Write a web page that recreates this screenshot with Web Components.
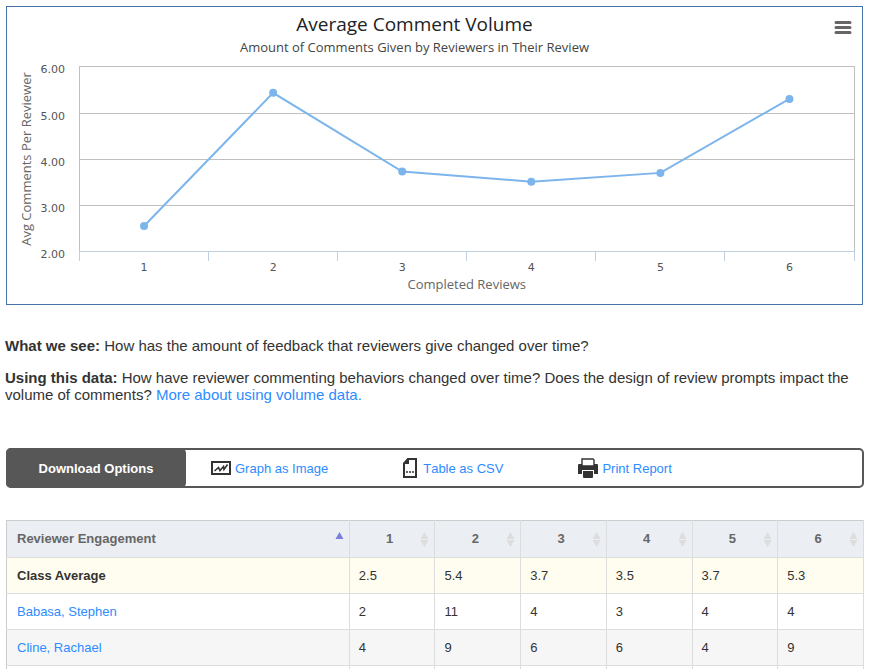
<!DOCTYPE html>
<html lang="en">

<head>
    <meta charset="UTF-8">
    <meta name="viewport" content="width=device-width, initial-scale=1.0">
    <title>Average Comment Volume</title>
    <style>
        :root {
            --text: #333;
            --link: #2d8cff;
            --dark: #575757;
        }
        body {
            margin: 6px 5px 0;
            background: #fff;
            color: var(--text);
            font: 15px/17px "Liberation Sans", Arial, sans-serif;
        }
    </style>
</head>

<body>
    <report-page>
        <line-chart slot="chart" heading="Average Comment Volume"
            subheading="Amount of Comments Given by Reviewers in Their Review"
            x-title="Completed Reviews" y-title="Avg Comments Per Reviewer"
            min="2" max="6" values="2.55,5.43,3.73,3.51,3.7,5.3"></line-chart>
        <report-note label="What we see:">How has the amount of feedback that reviewers give changed over time?</report-note>
        <report-note label="Using this data:">How have reviewer commenting behaviors changed over time? Does the design of review prompts impact the volume of comments? <text-link>More about using volume data.</text-link></report-note>
        <download-bar slot="downloads" label="Download Options">
            <download-item icon="graph">Graph as Image</download-item>
            <download-item icon="csv">Table as CSV</download-item>
            <download-item icon="print">Print Report</download-item>
        </download-bar>
        <engagement-table slot="table"></engagement-table>
    </report-page>

    <template id="report-page">
        <style>
            :host {
                display: block;
            }
            .chart {
                margin: 0 1px;
            }
            .notes {
                display: grid;
                gap: 15px;
                margin: 32px 0 45px;
            }
            .downloads {
                margin: 0 0 32px 1px;
            }
            .table {
                margin: 0 0 0 1px;
            }
        </style>
        <div class="chart"><slot name="chart"></slot></div>
        <div class="notes"><slot></slot></div>
        <div class="downloads"><slot name="downloads"></slot></div>
        <div class="table"><slot name="table"></slot></div>
    </template>

    <template id="report-note">
        <style>
            :host {
                display: block;
            }
            p {
                margin: 0;
            }
        </style>
        <p><b></b> <slot></slot></p>
    </template>

    <template id="text-link">
        <style>
            :host {
                display: inline;
            }
            a {
                color: var(--link);
                text-decoration: none;
            }
        </style>
        <a href="#"><slot></slot></a>
    </template>

    <template id="line-chart">
        <style>
            :host {
                display: block;
                position: relative;
                border: 1px solid #4572a7;
                font-family: "Open Sans", sans-serif;
            }
            svg {
                display: block;
                width: 100%;
            }
            button {
                position: absolute;
                top: 9px;
                right: 7px;
                width: 24px;
                height: 22px;
                padding: 0;
                border: 0;
                background: none;
            }
            text {
                font-family: "DejaVu Sans", sans-serif;
                font-size: 11px;
                fill: #555;
            }
            .title {
                font-family: inherit;
                font-size: 19px;
                fill: #222;
            }
            .subtitle {
                font-family: inherit;
                font-size: 13px;
                fill: #444;
            }
            .axis-title {
                font-family: inherit;
                font-size: 13px;
                fill: #666;
            }
            .grid {
                stroke: #c0c0c0;
                fill: none;
            }
            .axis {
                stroke: #c0d0e0;
            }
            .series {
                stroke: #7cb5ec;
                stroke-width: 2;
                fill: none;
            }
            circle {
                fill: #7cb5ec;
            }
        </style>
        <svg id="plot" height="297"></svg>
        <button type="button" aria-label="Chart menu">
            <svg width="24" height="22" viewBox="0 0 24 22" stroke="#666" stroke-width="3" stroke-linecap="round">
                <path d="M5 6.5H19M5 11.5H19M5 16.5H19" />
            </svg>
        </button>
    </template>

    <template id="download-bar">
        <style>
            :host {
                display: flex;
                height: 40px;
                box-sizing: border-box;
                border: 2px solid var(--dark);
                border-radius: 5px;
                font-size: 13px;
                font-kerning: none;
            }
            .label {
                display: flex;
                align-items: center;
                justify-content: center;
                width: 180px;
                margin: -2px 0 -2px -2px;
                border-radius: 5px;
                background: var(--dark);
                color: #fff;
                font-weight: bold;
            }
            .items {
                display: flex;
                align-items: center;
                gap: 74px;
                padding-left: 25px;
            }
        </style>
        <div class="label"></div>
        <div class="items"><slot></slot></div>
    </template>

    <template id="download-item">
        <style>
            :host {
                display: block;
            }
            a {
                display: flex;
                align-items: center;
                gap: 4px;
                color: var(--link);
                text-decoration: none;
            }
            svg {
                display: block;
            }
        </style>
        <a href="#"><span id="icon"></span><slot></slot></a>
    </template>

    <template id="engagement-table">
        <style>
            :host {
                display: block;
                font-size: 13px;
            }
            table {
                width: 100%;
                table-layout: fixed;
                border-collapse: collapse;
            }
            th, td {
                box-sizing: border-box;
                height: 36px;
                padding: 0 9px;
                border: 1px solid #ddd;
                text-align: left;
            }
            thead th {
                height: 37px;
                padding-bottom: 2px;
                border-top-color: #ccc;
                background: #ebeef3;
                color: #666;
            }
            th:first-child {
                width: 40%;
                padding-left: 10px;
                border-left-color: #ccc;
            }
            tbody tr:nth-child(odd) {
                background: #f6f6f6;
            }
            tbody tr:nth-child(even) {
                background: #fff;
            }
            tbody tr.average {
                background: #fffdf0;
            }
            tbody th {
                font-weight: normal;
            }
            .average th {
                font-weight: bold;
            }
            a {
                color: var(--link);
                text-decoration: none;
            }
            button {
                display: flex;
                align-items: center;
                width: 100%;
                padding: 0;
                border: 0;
                background: none;
                color: inherit;
                font: inherit;
                text-align: center;
            }
            button span {
                flex: 1;
            }
            th:first-child button span {
                text-align: left;
            }
            button svg {
                margin: 2px -4px 0 0;
            }
        </style>
        <table>
            <thead><tr></tr></thead>
            <tbody></tbody>
        </table>
    </template>

    <script>
        const ICONS = {
            graph: `<svg width="20" height="16" viewBox="0 0 20 16" fill="none" stroke="#333">
                <rect x="1" y="2" width="18" height="12" stroke-width="2" />
                <path d="M3.500 11L7.500 7.500L9 10.500L12.500 6.500L13 9.500L16.500 4.500" stroke-width="1.600" />
            </svg>`,
            csv: `<svg width="17" height="22" viewBox="0 0 17 22" fill="none" stroke="#333">
                <path d="M6 2H14V20H2V7Z" stroke-width="2" />
                <path d="M1 6L6 1H7V7H1Z" fill="#333" stroke="none" />
                <path d="M4 15H6M7 15H9M10 15H12" stroke-width="1.500" />
            </svg>`,
            print: `<svg width="21" height="20" viewBox="-1 0 21 20" fill="#333">
                <path d="M0 7Q0 6 1 6H19Q20 6 20 7V16H16V12H4V16H0Z" />
                <path d="M4 1H15L16 2V8H4Z" fill="#fff" stroke="#333" stroke-width="1.400" />
                <path d="M5 13H15V15H5Z" />
                <path d="M5 15H15V19Q15 20 14 20H6Q5 20 5 19Z" />
            </svg>`
        };

        const SORT_BOTH = '<svg width="9" height="16" viewBox="0 0 9 16" fill="#ddd"><path d="M4.500 1L8.500 8H.500ZM.500 9H8.500L4.500 16Z" /></svg>';
        const SORT_ASC = '<svg width="9" height="16" viewBox="0 0 9 16" fill="#7b7fdc"><path d="M4.500 1L8.500 8H.500Z" /></svg>';

        const ROWS = [
            ['Class Average', 2.5, 5.4, 3.7, 3.5, 3.7, 5.3],
            ['Babasa, Stephen', 2, 11, 4, 3, 4, 4],
            ['Cline, Rachael', 4, 9, 6, 6, 4, 9],
            ['', '', '', '', '', '', '']
        ];

        class TemplateElement extends HTMLElement {
            constructor() {
                super();
                this.attachShadow({ mode: 'open' });
                const template = document.querySelector(`template#${this.localName}`);
                this.shadowRoot.appendChild(template.content.cloneNode(true));
            }
            $(selector) {
                return this.shadowRoot.querySelector(selector);
            }
        }

        customElements.define('report-page', class extends TemplateElement {});
        customElements.define('text-link', class extends TemplateElement {});

        customElements.define('report-note', class extends TemplateElement {
            connectedCallback() {
                this.$('b').textContent = this.getAttribute('label');
            }
        });

        customElements.define('line-chart', class extends TemplateElement {
            connectedCallback() {
                this.draw();
                window.addEventListener('resize', () => this.draw());
            }
            draw() {
                const attr = name => this.getAttribute(name);
                const values = attr('values').split(',').map(Number);
                const min = Number(attr('min'));
                const max = Number(attr('max'));
                const width = this.clientWidth;
                const left = 72.5;
                const right = width - 8;
                const top = 59;
                const bottom = 244;
                const step = (right - left) / values.length;
                const toY = v => bottom - (v - min) / (max - min) * (bottom - top);
                // keep 1px lines on the pixel grid
                const snap = n => Math.floor(n) + 0.5;
                const edge = snap(right);
                const points = values.map((v, i) => [left + step * (i + 0.5), toY(v) + 0.5]);

                let svg = '';
                for (let v = min; v <= max; v++) {
                    const y = Math.ceil(toY(v)) + 0.5;
                    svg += `<path class="grid" d="M${left} ${y}H${edge}" />`;
                    svg += `<text x="58" y="${y + 6}" text-anchor="end">${v.toFixed(2)}</text>`;
                }
                svg += `<path class="grid" d="M${left} ${bottom}V${top}M${edge} ${bottom}V${top}" />`;
                svg += `<path class="axis" d="M${left} ${snap(bottom)}H${edge}" />`;
                for (let i = 0; i <= values.length; i++) {
                    svg += `<path class="axis" d="M${snap(left + step * i)} ${bottom}v10" />`;
                }
                svg += `<polyline class="series" points="${points.join(' ')}" />`;
                points.forEach(([x, y], i) => {
                    svg += `<circle cx="${x}" cy="${y}" r="4" />`;
                    svg += `<text x="${x}" y="264" text-anchor="middle">${i + 1}</text>`;
                });
                svg += `<text class="title" x="${width / 2 - 20}" y="24" text-anchor="middle">${attr('heading')}</text>`;
                svg += `<text class="subtitle" x="${width / 2 - 20}" y="45" text-anchor="middle">${attr('subheading')}</text>`;
                svg += `<text class="axis-title" x="${(left + right) / 2}" y="282" text-anchor="middle">${attr('x-title')}</text>`;
                svg += `<text class="axis-title" transform="translate(24 152) rotate(-90)" text-anchor="middle">${attr('y-title')}</text>`;
                this.$('#plot').innerHTML = svg;
            }
        });

        customElements.define('download-bar', class extends TemplateElement {
            connectedCallback() {
                this.$('.label').textContent = this.getAttribute('label');
            }
        });

        customElements.define('download-item', class extends TemplateElement {
            connectedCallback() {
                this.$('#icon').innerHTML = ICONS[this.getAttribute('icon')];
            }
        });

        customElements.define('engagement-table', class extends TemplateElement {
            connectedCallback() {
                const heads = ['Reviewer Engagement', 1, 2, 3, 4, 5, 6];
                this.$('thead tr').innerHTML = heads.map((h, i) =>
                    `<th scope="col"><button type="button"><span>${h}</span>${i ? SORT_BOTH : SORT_ASC}</button></th>`
                ).join('');
                this.$('tbody').innerHTML = ROWS.map(([name, ...cells], i) => `
                    <tr class="${i ? '' : 'average'}">
                        <th scope="row">${i && name ? `<a href="#">${name}</a>` : name}</th>
                        ${cells.map(c => `<td>${c}</td>`).join('')}
                    </tr>`
                ).join('');
            }
        });
    </script>
</body>

</html>
